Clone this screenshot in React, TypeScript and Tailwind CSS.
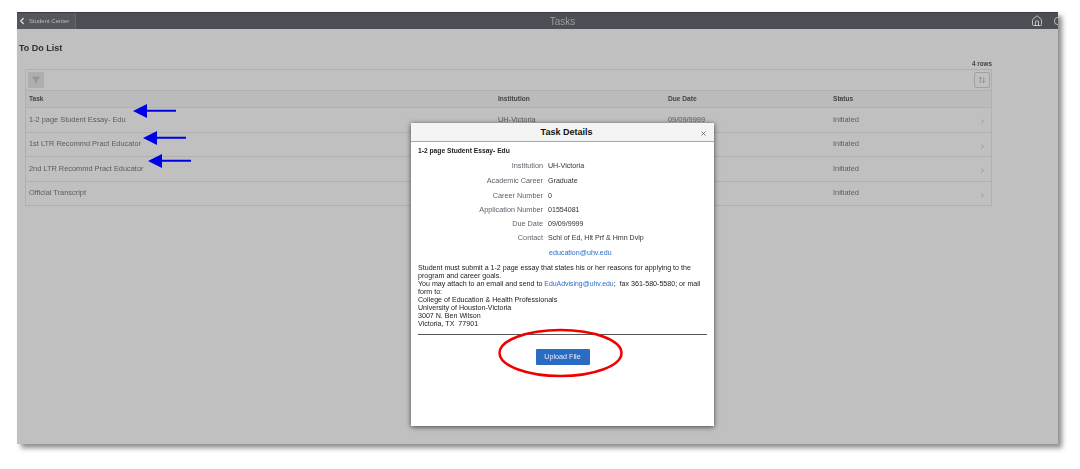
import React from "react";
import { ChevronLeft, ChevronRight, Home, Search, Filter, ArrowUpDown, X } from "lucide-react";

const rows = ["1-2 page Student Essay- Edu", "1st LTR Recommd Pract Educator", "2nd LTR Recommd Pract Educator", "Official Transcript"];
const heights = ["h-[25px]", "h-[24px]", "h-[25px]", "h-[24px]"];
const cols = "grid grid-cols-[470px_170px_165px_1fr] items-center";
const details: [string, string, string][] = [
  ["Institution", "UH-Victoria", "h-[15px]"],
  ["Academic Career", "Graduate", "h-[15px]"],
  ["Career Number", "0", "h-[14px]"],
  ["Application Number", "01554081", "h-[14px]"],
  ["Due Date", "09/09/9999", "h-[14px]"],
  ["Contact", "Schl of Ed, Hlt Prf & Hmn Dvlp", "h-[15px]"],
];

function Arrow({ x, y }: { x: number; y: number }) {
  return (
    <svg className="absolute" style={{ left: x, top: y - 8 }} width="46" height="16" viewBox="0 0 46 16">
      <path d="M1 8 L15 1 L15 6.8 L44 6.8 L44 8.8 L15 8.8 L15 15 Z" fill="#0000e6" />
    </svg>
  );
}

export default function App() {
  return (
    <div className="relative w-[1080px] h-[469px] overflow-hidden bg-white font-['Liberation_Sans',Arial,sans-serif]">
      <div className="blur-[0.35px] relative w-[1080px] h-[469px]">
        {/* page frame */}
        <div className="absolute left-[17px] top-[12px] w-[1041px] h-[432px] bg-[#c0c0c0] shadow-[4px_4px_5px_rgba(0,0,0,0.45)] overflow-hidden flex flex-col">
          <div className="h-[17px] shrink-0 bg-[#4b4f55] border-t border-[#3a3d42] relative flex items-center justify-between">
            <div className="h-full w-[59px] bg-[#53575d] border-r border-[#65696e] flex items-center text-[#b9bbbd] text-[6px]">
              <ChevronLeft size={10} strokeWidth={3} className="text-[#e0e0e0] mr-[2px] shrink-0" />
              <span>Student Center</span>
            </div>
            <div className="absolute inset-0 pl-[50px] flex items-center justify-center text-[#9a9da0] text-[10px]">Tasks</div>
            <div className="flex items-center gap-[10px] relative -mr-[6px]">
              <Home size={12} strokeWidth={1.5} className="text-[#e6e6e6]" />
              <Search size={11} strokeWidth={1.5} className="text-[#e6e6e6]" />
            </div>
          </div>
          <div className="h-[27px] mt-[11px] ml-[2px] text-[9px] font-bold text-[#2e2e2e] leading-[17px] shrink-0">To Do List</div>
          <div className="ml-[8px] w-[967px] relative">
            <div className="text-right text-[6.3px] font-bold text-[#444] h-[10px] leading-[9px] absolute right-0 -top-[8px]">4 rows</div>
            <div className="mt-[1.5px] border border-[#b0b0b0] border-b-0">
              <div className="h-[21px] flex items-center justify-between border-b border-[#b0b0b0] pl-[2px] pr-[1px]">
                <div className="w-[16px] h-[16px] bg-[#aeaeae] flex items-center justify-center">
                  <Filter size={8} className="text-[#979797] fill-[#979797]" />
                </div>
                <div className="w-[16px] h-[16px] border border-[#a0a0a0] rounded-[2px] flex items-center justify-center">
                  <ArrowUpDown size={8} className="text-[#808080]" />
                </div>
              </div>
              <div className={`${cols} h-[17px] bg-[#bbbbbb] border-b border-[#b0b0b0] text-[6.6px] font-bold text-[#444] pl-[2px]`}>
                <span className="pl-px">Task</span>
                <span>Institution</span>
                <span>Due Date</span>
                <span>Status</span>
              </div>
              {rows.map((t, i) => (
                <div key={t} className={`${cols} ${heights[i]} border-b border-[#b0b0b0] text-[7.4px] text-[#5c5c5c] pl-[2px] relative`}>
                  <span className="pl-px">{t}</span>
                  <span>UH-Victoria</span>
                  <span>09/09/9999</span>
                  <span>Initiated</span>
                  <ChevronRight size={7} className="absolute right-[5px] top-[10px] text-[#808080]" />
                </div>
              ))}
            </div>
          </div>
        </div>

        <Arrow x={132} y={111} />
        <Arrow x={142} y={138} />
        <Arrow x={147} y={161} />

        {/* modal */}
        <div className="absolute left-[411px] top-[123px] w-[303px] h-[303px] bg-white shadow-[0_1px_5px_rgba(0,0,0,0.65)] flex flex-col">
          <div className="h-[19px] shrink-0 bg-[#f4f4f4] border-b border-[#a8a8a8] relative flex items-center justify-center text-[9px] font-bold text-[#111] pl-[8px] pt-px">
            Task Details
            <X size={7} strokeWidth={2.5} className="absolute right-[7px] top-[7px] text-[#555]" />
          </div>
          <div className="pl-[7px] pr-[7px] flex flex-col">
            <div className="h-[16px] mt-[1px] text-[6.7px] font-bold text-[#222] leading-[16px]">1-2 page Student Essay- Edu</div>
            <div className="flex flex-col">
              {details.map(([l, v, h]) => (
                <div key={l} className={`flex items-center ${h}`}>
                  <span className="w-[125px] text-right text-[7.3px] text-[#5f636c]">{l}</span>
                  <span className="ml-[5px] text-[7.1px] text-[#333]">{v}</span>
                </div>
              ))}
              <div className="flex items-center h-[14px]">
                <span className="ml-[131px] text-[7.1px] text-[#2a6fc4]">education@uhv.edu</span>
              </div>
            </div>
            <div className="mt-[4px] text-[7.1px] leading-[8px] text-[#222] whitespace-nowrap">
              <div>Student must submit a 1-2 page essay that states his or her reasons for applying to the</div>
              <div>program and career goals.</div>
              <div>You may attach to an email and send to <span className="text-[6.9px] text-[#2a6fc4]">EduAdvising@uhv.edu</span>;&nbsp; fax 361-580-5580; or mail</div>
              <div>form to:</div>
              <div>College of Education &amp; Health Professionals</div>
              <div>University of Houston-Victoria</div>
              <div>3007 N. Ben Wilson</div>
              <div>Victoria, TX&nbsp; 77901</div>
            </div>
            <div className="mt-[6px] h-px bg-[#555]" />
            <div className="mt-[14px] flex justify-center">
              <div className="w-[54px] h-[16px] bg-[#2a6cc4] rounded-[1px] flex items-center justify-center text-[7.2px] text-[#e8eefa]">Upload File</div>
            </div>
          </div>
        </div>

        <svg className="absolute left-[495px] top-[326px]" width="132" height="54" viewBox="0 0 132 54">
          <ellipse cx="65.5" cy="27" rx="61" ry="23" fill="none" stroke="#f00000" strokeWidth="2.5" />
        </svg>
      </div>
    </div>
  );
}
